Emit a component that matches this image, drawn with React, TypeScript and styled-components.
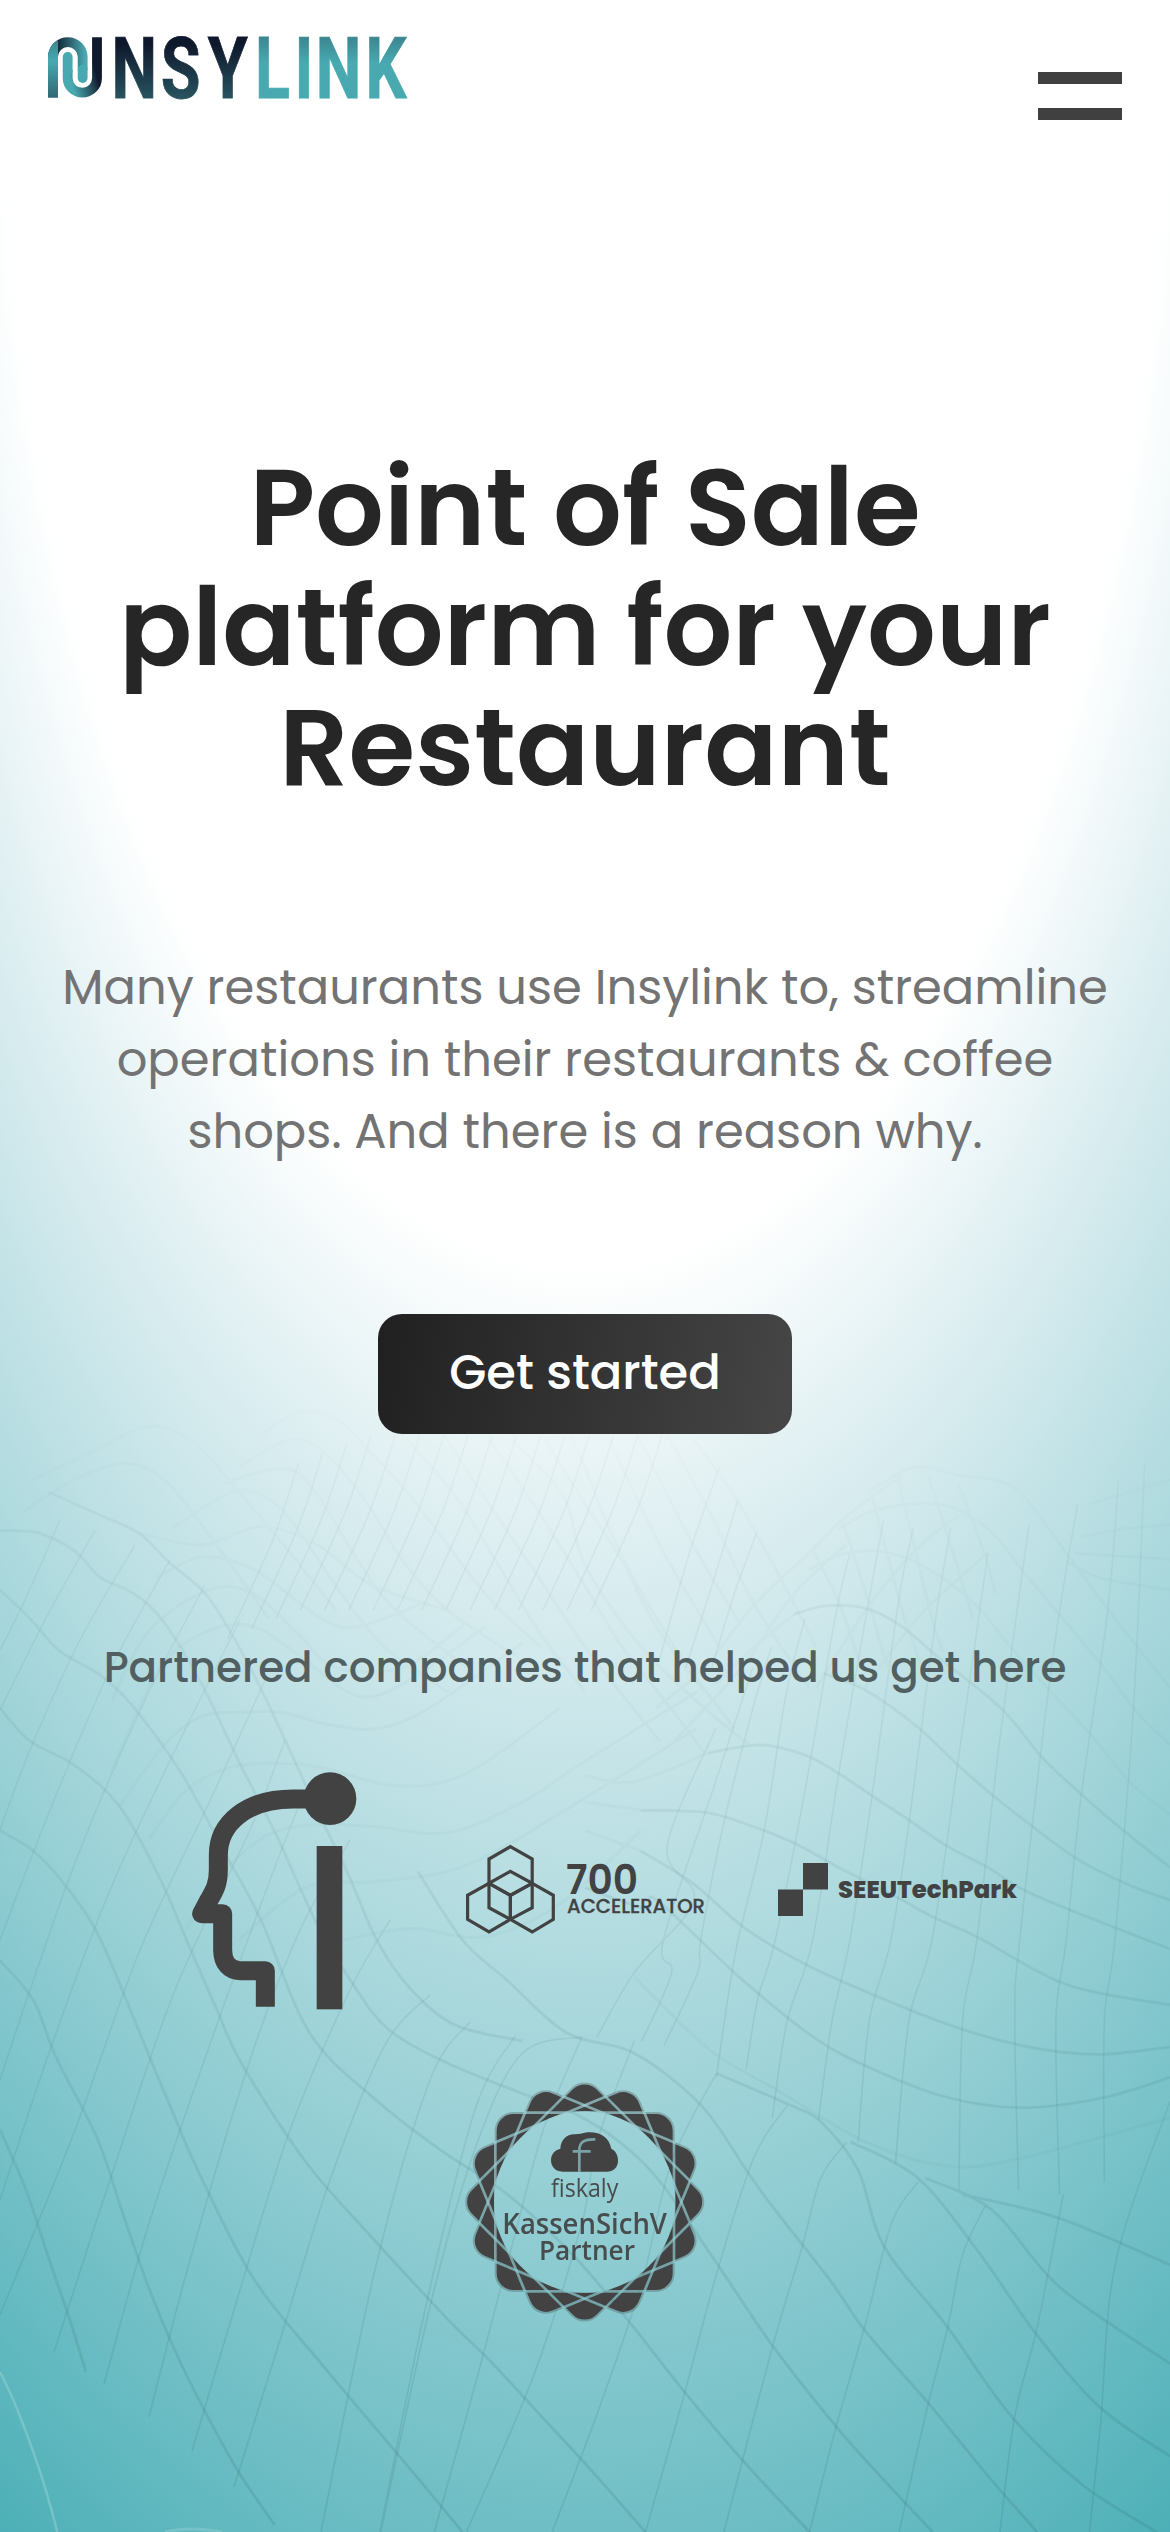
import React from 'react';
import styled, { createGlobalStyle } from 'styled-components';

const GlobalStyle = createGlobalStyle`
  *, *::before, *::after { box-sizing: border-box; }
  body {
    margin: 0;
    background: #fff;
    font-family: Poppins, Inter, "Open Sans", sans-serif;
  }
`;

const Page = styled.main`
  position: relative;
  isolation: isolate;
  display: flex;
  flex-direction: column;
  width: 100%;
  height: 2532px;
  overflow: hidden;
  background: radial-gradient(125% 125% at 50% 0%, #fff 40%, #daedf0 50%, #279fa8 100%);
`;

const Backdrop = styled.svg`
  position: absolute;
  inset: 0;
  z-index: -1;
  width: 1170px;
  height: 2532px;
  fill: none;
  stroke: #2b5f60;
`;

const Header = styled.header`
  display: flex;
  justify-content: space-between;
  align-items: flex-start;
  height: 448px;
  padding: 36px 48px 0;
`;

const BrandLink = styled.a`
  display: block;
  width: 362px;
  height: 64px;
`;

const BrandMark = styled.svg`
  display: block;
  width: 362px;
  height: 64px;
  overflow: visible;
`;

const MenuButton = styled.button`
  display: flex;
  flex-direction: column;
  gap: 24px;
  width: 84px;
  margin: 36px 0 0;
  padding: 0;
  border: 0;
  background: none;
`;

const MenuBar = styled.span`
  display: block;
  height: 12px;
  background: #404040;
`;

const Hero = styled.section`
  display: flex;
  flex-direction: column;
  align-items: center;
  text-align: center;
  white-space: nowrap;
`;

const Title = styled.h1`
  margin: 0;
  font-size: 108px;
  font-weight: 600;
  line-height: 120px;
  color: #262626;
`;

const Lead = styled.p`
  margin: 144px 0 0;
  font-size: 48px;
  font-weight: 400;
  line-height: 72px;
  color: #737373;
`;

const Line = styled.span`
  display: block;
`;

const CallToAction = styled.button`
  display: flex;
  align-items: center;
  justify-content: center;
  width: 414px;
  height: 120px;
  margin: 146px 0 0;
  padding: 0 0 2px;
  border: 0;
  border-radius: 24px;
  background: linear-gradient(100deg, #202020, #464646);
  color: #fff;
  font: inherit;
  font-size: 48px;
  font-weight: 500;
  line-height: 72px;
`;

const Partners = styled.section`
  display: flex;
  flex-direction: column;
  align-items: center;
  margin-top: 204px;
`;

const PartnersTitle = styled.h2`
  margin: 0;
  font-size: 42px;
  font-weight: 500;
  line-height: 60px;
  color: #525f61;
  white-space: nowrap;
`;

const PartnerList = styled.div`
  display: flex;
  flex-wrap: wrap;
  justify-content: center;
  align-items: center;
  gap: 72px;
  width: 1074px;
  margin-top: 72px;
`;

const PartnerLogo = styled.svg<{ $h: number }>`
  display: block;
  width: 240px;
  height: ${(p) => p.$h}px;
  overflow: visible;
  fill: #424242;
`;

type Pt = [number, number];

/* Tile-local grids of the wave mesh, mapped to page pixels. */
const a = (x: number, y: number): Pt => [x * 0.3731, 1300 + y * 0.4082];
const b = (x: number, y: number): Pt => [585 + x * 0.3731, 1300 + y * 0.4082];
const c = (x: number, y: number): Pt => [x * 0.7462, 1900 + y * 0.4031];

/* Smooth Catmull-Rom curve through the given points. */
function curve(pts: Pt[]): string {
  const n = (v: number) => v.toFixed(1);
  let d = `M${n(pts[0][0])} ${n(pts[0][1])}`;
  for (let i = 0; i < pts.length - 1; i++) {
    const p = pts[Math.max(i - 1, 0)];
    const q = pts[i];
    const r = pts[i + 1];
    const s = pts[Math.min(i + 2, pts.length - 1)];
    d += `C${n(q[0] + (r[0] - p[0]) / 6)} ${n(q[1] + (r[1] - p[1]) / 6)} ${n(r[0] - (s[0] - q[0]) / 6)} ${n(r[1] - (s[1] - q[1]) / 6)} ${n(r[0])} ${n(r[1])}`;
  }
  return d;
}

const steep: Pt[][] = [
  [[60, 1520], [25, 1600], [0, 1650]],
  [[95, 1530], [45, 1620], [0, 1710]],
  [[135, 1545], [80, 1640], [30, 1750], [0, 1830]],
  [[170, 1560], [110, 1670], [50, 1810], [0, 1940]],
  [[205, 1585], [145, 1700], [80, 1850], [30, 1990], [0, 2080]],
  [[240, 1620], [180, 1740], [110, 1890], [50, 2050], [0, 2200]],
  [[265, 1680], [215, 1790], [140, 1950], [75, 2130], [0, 2315]],
  [[285, 1740], [250, 1830], [175, 1990], [110, 2180], [54, 2352]],
  [[305, 1790], [270, 1880], [215, 2030], [150, 2220], [104, 2384]],
  [[350, 1840], [300, 1930], [250, 2060], [190, 2260], [149, 2417]],
  [[390, 1920], [350, 1990], [290, 2130], [240, 2290], [192, 2451]],
  [[430, 1995], [385, 2045], [330, 2180], [280, 2340], [234, 2487]],
  [[470, 2022], [430, 2080], [375, 2270], [321, 2532]],
  [[515, 2036], [475, 2110], [425, 2310], [380, 2532]],
  [c(780, 340), c(730, 560), c(690, 830), c(640, 1180), c(582, 1568)],
  [c(780, 340), c(700, 380), c(640, 600), c(580, 980), c(510, 1568)],
  [c(850, 350), c(800, 600), c(780, 800), c(715, 1180), c(625, 1568)],
  [c(960, 430), c(900, 650), c(860, 950), c(805, 1250), c(740, 1568)],
  [c(1055, 510), c(1010, 640), c(960, 930), c(915, 1240), c(865, 1568)],
  [c(1135, 600), c(1100, 690), c(1075, 860), c(1035, 1110), c(970, 1568)],
  [c(1230, 700), c(1195, 800), c(1160, 1050), c(1120, 1310), c(1085, 1568)],
  [c(1320, 760), c(1290, 880), c(1270, 1060), c(1240, 1280), c(1205, 1568)],
  [c(1425, 730), c(1390, 1060), c(1360, 1280), c(1340, 1568)],
  [c(1568, 500), c(1495, 900), c(1475, 1300), c(1460, 1568)],
  [c(800, 340), c(850, 180), c(930, 0), b(220, 1340), b(350, 1050)],
  [c(860, 350), c(900, 180), b(210, 1568), b(350, 1180), b(450, 900)],
  [c(890, 360), c(935, 180), b(310, 1568), b(370, 1290), b(450, 1000), b(500, 850)],
  [c(960, 440), c(975, 250), b(410, 1568), b(480, 1300), b(540, 960), b(590, 780)],
  [c(1000, 420), c(1015, 250), b(510, 1568), b(590, 1200), b(670, 780), b(710, 620)],
  [c(1035, 540), c(1055, 300), b(610, 1568), b(680, 1160), b(760, 740), b(800, 540)],
  [c(1097, 545), c(1115, 300), b(710, 1568), b(770, 1210), b(840, 740), b(880, 560)],
  [c(1150, 600), c(1165, 300), b(820, 1568), b(870, 1270), b(940, 780), b(980, 560)],
  [c(1200, 655), c(1218, 300), b(930, 1568), b(1000, 1130), b(1080, 620)],
  [c(1285, 720), c(1290, 300), b(1050, 1568), b(1110, 1090), b(1190, 550)],
  [c(1365, 720), c(1360, 300), b(1165, 1568), b(1250, 900), b(1320, 500)],
  [c(1420, 730), c(1415, 300), b(1290, 1568), b(1330, 1215), b(1400, 770), b(1430, 440)],
  [c(1480, 700), c(1480, 300), b(1420, 1568), b(1470, 1000), b(1500, 400)],
  [b(360, 410), b(280, 620), b(200, 880)],
  [b(410, 490), b(340, 700), b(270, 900)],
  [b(460, 570), b(400, 720), b(340, 900)],
];

/* Central fan of near-parallel lines under the button. */
const fan: Pt[][] = Array.from({ length: 16 }, (_, k) => {
  const x = 800 + k * 65;
  const top = k < 3 ? 400 - k * 25 : 330;
  return [a(x, top), a(x - 70, top + 190), a(x - 190, top + 430)];
});

const slopes: Pt[][] = [
  [a(0, 1000), a(80, 1080), a(200, 1140), a(320, 1240), a(430, 1420), a(500, 1568), c(290, 270), c(325, 410), c(410, 650), c(490, 820), c(600, 1040), c(655, 1140), c(720, 1270), c(790, 1410), c(865, 1568)],
  [a(0, 1300), a(90, 1350), a(180, 1440), a(270, 1568), c(195, 365), c(230, 520), c(265, 670), c(340, 940), c(435, 1160), c(540, 1390), c(620, 1568)],
  [c(0, 150), c(45, 250), c(75, 390), c(130, 590), c(165, 780), c(200, 965), c(235, 1120), c(275, 1270), c(320, 1420), c(368, 1550)],
  [c(0, 570), c(35, 720), c(62, 870), c(95, 1050), c(115, 1170)],
  [a(0, 710), a(80, 780), a(160, 860), a(270, 920), a(360, 1000), a(490, 1165), a(600, 1350), a(700, 1520), c(415, 330), c(500, 490), c(590, 620), c(680, 730), c(770, 885), c(845, 1050), c(915, 1215), c(1000, 1400), c(1085, 1568)],
  [a(0, 565), a(100, 570), a(200, 615), a(270, 680), a(360, 720), a(440, 790), a(540, 940), a(640, 1130), a(740, 1310), a(850, 1530), c(470, 200), c(520, 320), c(600, 405), c(700, 480), c(770, 530), c(830, 600), c(885, 700), c(960, 900), c(1035, 1105), c(1120, 1305), c(1180, 1430), c(1250, 1568)],
  [a(130, 470), a(250, 520), a(370, 570), a(450, 640), a(560, 730), a(670, 900), a(760, 1070), a(850, 1250), a(930, 1400), a(1010, 1568), c(550, 220), c(610, 310), c(700, 350)],
  [a(1120, 1400), a(1240, 1568), c(680, 200), c(760, 330), c(850, 380), c(940, 510), c(1000, 670), c(1035, 760), c(1115, 950), c(1160, 1070), c(1245, 1250), c(1320, 1420), c(1390, 1568)],
  [c(960, 430), c(1060, 510), c(1100, 550), c(1150, 670), c(1185, 860), c(1270, 1060), c(1355, 1280), c(1450, 1450), c(1550, 1568)],
  [c(1140, 600), c(1230, 690), c(1310, 870), c(1390, 1080), c(1475, 1260), c(1568, 1380)],
  [c(1240, 690), c(1330, 770), c(1420, 960), c(1568, 1150)],
  [c(1290, 730), c(1420, 790), c(1568, 905)],
  [b(0, 1440), b(160, 1490), c(880, 0), c(990, 190), c(1090, 340), c(1170, 420), c(1270, 490), c(1370, 515), c(1480, 490), c(1568, 440)],
  [b(150, 1350), b(290, 1430), b(430, 1540), c(1080, 160), c(1170, 235), c(1280, 315), c(1380, 365), c(1470, 383), c(1568, 365)],
  [b(150, 1250), b(320, 1255), b(420, 1280), b(560, 1330), b(680, 1390), b(830, 1460), b(930, 1510), b(1050, 1560), c(1430, 210), c(1568, 260)],
  [b(330, 1110), b(470, 1090), b(590, 1115), b(680, 1160), b(770, 1215), b(870, 1275), b(965, 1335), b(1080, 1390), b(1210, 1460), b(1568, 1590)],
  [b(640, 915), b(750, 955), b(890, 1045), b(1000, 1140), b(1095, 1215), b(1200, 1290), b(1320, 1370), b(1450, 1430), b(1568, 1470)],
  [b(560, 770), b(640, 750), b(750, 755), b(850, 800), b(940, 870), b(1115, 1000), b(1225, 1120), b(1335, 1215), b(1450, 1305), b(1568, 1390)],
];

const mist: Pt[][] = [
  [b(600, 660), b(700, 620), b(820, 620), b(940, 670), b(1050, 750), b(1150, 860), b(1260, 970), b(1370, 1080), b(1470, 1190), b(1568, 1260)],
  [b(680, 560), b(780, 515), b(950, 500), b(1080, 560), b(1170, 660), b(1280, 780), b(1390, 900), b(1480, 1010), b(1568, 1090)],
  [b(760, 470), b(880, 410), b(1000, 430), b(1150, 460), b(1290, 620), b(1420, 780), b(1568, 950)],
  [c(850, 190), c(950, 370), c(1040, 470), c(1160, 600), c(1270, 660), c(1370, 640), c(1568, 540)],
  [b(0, 1300), b(150, 1350)],
  [b(0, 1230), b(150, 1250)],
  [b(0, 1165), b(130, 1180), b(330, 1110)],
  [b(350, 940), b(440, 860), b(560, 770)],
  [b(1290, 640), b(1380, 680), b(1568, 710)],
  [b(1330, 580), b(1450, 560), b(1568, 550)],
  [b(1310, 620), b(1568, 635)],
  [b(1350, 500), b(1568, 440)],
  [a(700, 330), a(800, 275), a(900, 290), a(980, 360), a(1090, 470), a(1200, 600), a(1320, 740), a(1450, 850)],
  [a(640, 410), a(750, 350), a(820, 345), a(900, 400), a(1000, 520), a(1080, 640), a(1200, 760), a(1380, 870)],
  [a(600, 450), a(700, 420), a(790, 420), a(860, 490), a(960, 640), a(1060, 760), a(1250, 900)],
  [a(460, 560), a(560, 500), a(650, 465), a(740, 500), a(820, 590), a(900, 700), a(1030, 850), a(1200, 960)],
  [a(370, 570), a(540, 600), a(700, 555), a(850, 600), a(1000, 700), a(1200, 760)],
  [a(420, 680), a(540, 630), a(680, 660), a(860, 780), a(960, 800), a(1140, 740)],
  [a(300, 980), a(400, 810), a(560, 710), a(680, 720), a(800, 820), a(900, 900), a(1080, 900), a(1250, 790)],
  [a(300, 1150), a(430, 900), a(560, 810), a(680, 800), a(800, 870), a(960, 970), a(1100, 930), a(1300, 800)],
  [a(320, 1240), a(440, 1090), a(540, 1020), a(640, 1010), a(750, 1010), a(880, 1040), a(1010, 1050), a(1150, 1000), a(1400, 840)],
  [a(400, 1320), a(500, 1200), a(620, 1145), a(740, 1135), a(860, 1145), a(1060, 1190), a(1250, 1160), a(1500, 1000)],
  [a(500, 1540), a(600, 1400), a(720, 1310), a(850, 1285), a(1000, 1290), a(1200, 1305), a(1400, 1230), b(0, 1130), b(300, 960)],
  [a(640, 1568), a(750, 1480), a(850, 1430), a(1000, 1425), a(1200, 1400), a(1350, 1340), b(0, 1220), b(300, 1050)],
  [a(920, 1568), a(1100, 1540), a(1300, 1560), a(1500, 1480), b(150, 1300)],
  [a(90, 440), a(250, 370), a(400, 310), a(520, 350), a(640, 470), a(760, 600), a(900, 760)],
  [a(60, 520), a(200, 440), a(340, 400), a(450, 450), a(580, 600), a(720, 780)],
  [a(1090, 340), a(1220, 480), a(1330, 640), a(1450, 820), b(0, 960)],
  [a(1190, 330), a(1310, 500), a(1430, 660), b(0, 850), b(200, 1080)],
  [a(1310, 340), a(1430, 500), b(0, 700), b(100, 850), b(230, 1000), b(320, 1110)],
  [a(1370, 340), a(1510, 480), b(0, 650), b(150, 850), b(320, 1000), b(440, 1090)],
  [a(1460, 340), b(0, 500), b(100, 640), b(190, 800), b(320, 960)],
  [a(1530, 330), b(0, 410), b(100, 630), b(240, 850), b(400, 1050)],
  [b(60, 330), b(200, 600), b(360, 850)],
  [b(140, 330), b(290, 600), b(420, 800)],
  [b(220, 330), b(340, 530), b(450, 740), b(600, 950)],
  [b(290, 340), b(400, 480), b(500, 640), b(620, 850)],
  [b(610, 610), b(680, 740), b(740, 900)],
  [b(690, 540), b(760, 740), b(810, 900)],
  [b(770, 480), b(850, 760), b(900, 890)],
  [b(840, 440), b(930, 780), b(960, 860)],
  [b(920, 430), b(980, 600), b(1040, 780)],
  [b(1000, 450), b(1070, 620), b(1100, 720)],
  [b(190, 1000), b(320, 900), b(450, 750), b(600, 620), b(700, 530), b(850, 430)],
  [b(240, 1080), b(420, 900), b(560, 720), b(700, 600)],
  [b(620, 950), b(760, 750), b(900, 600), b(1000, 530)],
  [b(750, 950), b(900, 770), b(1080, 620)],
];

function Waves() {
  return (
    <Backdrop viewBox="0 0 1170 2532" aria-hidden="true">
      <defs>
        <linearGradient id="fade" x1="0" y1="1370" x2="0" y2="2532" gradientUnits="userSpaceOnUse">
          <stop offset="0" stopColor="#fff" stopOpacity="0.1" />
          <stop offset="0.15" stopColor="#fff" stopOpacity="0.4" />
          <stop offset="0.5" stopColor="#fff" stopOpacity="0.6" />
          <stop offset="1" stopColor="#fff" />
        </linearGradient>
        <mask id="waveMask" maskUnits="userSpaceOnUse" x="0" y="1370" width="1170" height="1162">
          <rect y="1370" width="1170" height="1162" fill="url(#fade)" stroke="none" />
        </mask>
      </defs>
      <g mask="url(#waveMask)">
        <g strokeWidth={1.6} opacity={0.15}>
          {steep.map((l, i) => <path key={i} d={curve(l)} />)}
          {fan.map((l, i) => <path key={i} d={curve(l)} />)}
        </g>
        <g strokeWidth={2.8} opacity={0.15}>
          {slopes.map((l, i) => <path key={i} d={curve(l)} />)}
        </g>
        <g strokeWidth={3} opacity={0.055}>
          {mist.map((l, i) => <path key={i} d={curve(l)} />)}
        </g>
        <path d="M0 2372C20 2410 45 2480 58 2535" stroke="#a9dcdc" strokeWidth="2.5" opacity="0.4" />
        <path d="M165 2532Q190 2526 222 2532" stroke="#a9dcdc" strokeWidth="3" opacity="0.3" />
      </g>
    </Backdrop>
  );
}

function BrandLogo() {
  return (
    <BrandMark viewBox="48 36 362 64" role="img" aria-label="Insylink">
      <defs>
        <linearGradient id="bar" x1="0" y1="52" x2="0" y2="233" gradientUnits="userSpaceOnUse">
          <stop offset="0.1" stopColor="#3c8c95" />
          <stop offset="0.4" stopColor="#48a9b1" />
          <stop offset="1" stopColor="#306772" />
        </linearGradient>
        <linearGradient id="arch" x1="84" y1="0" x2="165" y2="0" gradientUnits="userSpaceOnUse">
          <stop offset="0" stopColor="#182838" />
          <stop offset="1" stopColor="#48a9b1" />
        </linearGradient>
        <linearGradient id="hook" x1="115" y1="190" x2="200" y2="165" gradientUnits="userSpaceOnUse">
          <stop offset="0.1" stopColor="#48a9b1" />
          <stop offset="0.75" stopColor="#234753" />
          <stop offset="1" stopColor="#101a2d" />
        </linearGradient>
        <linearGradient id="navy" x1="0" y1="37" x2="0" y2="98" gradientUnits="userSpaceOnUse">
          <stop offset="0.1" stopColor="#0e172b" />
          <stop offset="1" stopColor="#28535f" />
        </linearGradient>
        <linearGradient id="teal" x1="0" y1="37" x2="0" y2="98" gradientUnits="userSpaceOnUse">
          <stop offset="0" stopColor="#3b858f" />
          <stop offset="0.42" stopColor="#48a9b1" />
        </linearGradient>
      </defs>
      <g transform="translate(30 20) scale(.33333)" fill="none" strokeWidth="29.5">
        <path d="M69 111A44.5 44.5 0 0 1 158 111V150" stroke="url(#arch)" />
        <path d="M158 149V174" stroke="#48a9b1" strokeLinecap="round" />
        <path d="M201 52V174A44 44 0 0 1 113 174V150" stroke="url(#hook)" />
        <path d="M113 151V111" stroke="#48a9b1" strokeLinecap="round" />
        <path d="M54 233V111A59 59 0 0 1 84 60V233Z" fill="url(#bar)" />
      </g>
      <g transform="scale(.76 1)" fontFamily="Roboto, sans-serif" fontWeight="700" fontSize="85" strokeWidth="0.8">
        <text x="146.8 211.5 273.5" y="97.7" fill="url(#navy)" stroke="url(#navy)">NSY</text>
        <text x="335.6 387.5 415.3 480.8" y="97.7" fill="url(#teal)" stroke="url(#teal)">LINK</text>
      </g>
    </BrandMark>
  );
}

function HeadLogo() {
  return (
    <PartnerLogo $h={240} viewBox="-51 90 720 720" aria-hidden="true">
      <path
        d="M430 177H370C230 177 145 250 145 345V390C145 430 135 450 118 478L95 521H158V630C158 670 180 692 210 692H286V800"
        fill="none"
        stroke="#424242"
        strokeWidth="57"
        strokeLinejoin="round"
      />
      <circle cx="480" cy="176" r="79" />
      <rect x="440" y="318" width="77" height="490" />
    </PartnerLogo>
  );
}

function AcceleratorLogo() {
  return (
    <PartnerLogo $h={90} viewBox="0 0 240 90">
      <g fill="none" stroke="#424242" strokeWidth="3.2">
        <path d="M45.4 1.7L67.2 14V38.3L45.4 50.3L24 38.3V14Z" />
        <path d="M45.4 26.3L67.2 38.3V62.7L45.4 74.3L24 62.7V38.3Z" />
        <path d="M24 38.3L45.4 50.3V74.3L24 87L2.6 74.3V50.3Z" />
        <path d="M67.2 38.3L88.3 50.3V74.3L67.2 87L45.4 74.3V50.3Z" />
      </g>
      <text x="101" y="48.5" fontSize="41" fontWeight="600" textLength="72" lengthAdjust="spacingAndGlyphs">700</text>
      <text x="102" y="68" fontSize="19" fontWeight="500" stroke="#424242" strokeWidth="0.3" textLength="138" lengthAdjust="spacingAndGlyphs">ACCELERATOR</text>
    </PartnerLogo>
  );
}

function TechParkLogo() {
  return (
    <PartnerLogo $h={54} viewBox="0 0 240 54">
      <rect x="26" y="0" width="25" height="26.5" />
      <rect x="1" y="26.5" width="25" height="26.5" />
      <text x="61" y="35" fontSize="25" fontWeight="800" textLength="179" lengthAdjust="spacingAndGlyphs">SEEUTechPark</text>
    </PartnerLogo>
  );
}

const turns = [0, 22.5, 45, 67.5];

function FiskalyLogo() {
  return (
    <PartnerLogo $h={240} viewBox="45 36 720 720">
      <defs>
        <mask id="rosette" maskUnits="userSpaceOnUse" x="30" y="20" width="750" height="750">
          {turns.map((t) => (
            <rect key={t} x="134" y="126" width="540" height="540" rx="56" fill="#fff" transform={`rotate(${t} 404 396)`} />
          ))}
          {turns.map((t) => (
            <rect key={t} x="136" y="128" width="536" height="536" rx="54" fill="none" stroke="#000" strokeWidth="8" opacity="0.7" transform={`rotate(${t} 404 396)`} />
          ))}
          <circle cx="404" cy="396" r="272" fill="#000" />
        </mask>
      </defs>
      <rect x="30" y="20" width="750" height="750" mask="url(#rosette)" />
      <path d="M338 305C316 305 303 290 303 271C303 253 314 240 331 236C332 208 352 191 376 193C388 192 396 190 404 188C442 182 476 196 484 236C498 243 504 256 504 272C504 292 490 305 470 305Z" />
      <path d="M388 305V240C388 216 402 207 436 208M368 244H422" fill="none" stroke="#91cdd1" strokeWidth="8" opacity="0.7" />
      <g fontFamily="'Open Sans', sans-serif" opacity="0.92">
        <text x="303" y="380" fontSize="74" fontWeight="400" textLength="202" lengthAdjust="spacingAndGlyphs">fiskaly</text>
        <text x="157" y="492" fontSize="88" fontWeight="600" textLength="494" lengthAdjust="spacingAndGlyphs">KassenSichV</text>
        <text x="267" y="570" fontSize="80" fontWeight="600" textLength="288" lengthAdjust="spacingAndGlyphs">Partner</text>
      </g>
    </PartnerLogo>
  );
}

export default function App() {
  return (
    <>
      <GlobalStyle />
      <Page>
        <Waves />
        <Header>
          <BrandLink>
            <BrandLogo />
          </BrandLink>
          <MenuButton aria-label="Menu">
            <MenuBar />
            <MenuBar />
          </MenuButton>
        </Header>
        <Hero>
          <Title>
            <Line>Point of Sale</Line>
            <Line>platform for your</Line>
            <Line>Restaurant</Line>
          </Title>
          <Lead>
            <Line>Many restaurants use Insylink to, streamline</Line>
            <Line>operations in their restaurants &amp; coffee</Line>
            <Line>shops. And there is a reason why.</Line>
          </Lead>
          <CallToAction>Get started</CallToAction>
        </Hero>
        <Partners>
          <PartnersTitle>Partnered companies that helped us get here</PartnersTitle>
          <PartnerList>
            <HeadLogo />
            <AcceleratorLogo />
            <TechParkLogo />
            <FiskalyLogo />
          </PartnerList>
        </Partners>
      </Page>
    </>
  );
}
